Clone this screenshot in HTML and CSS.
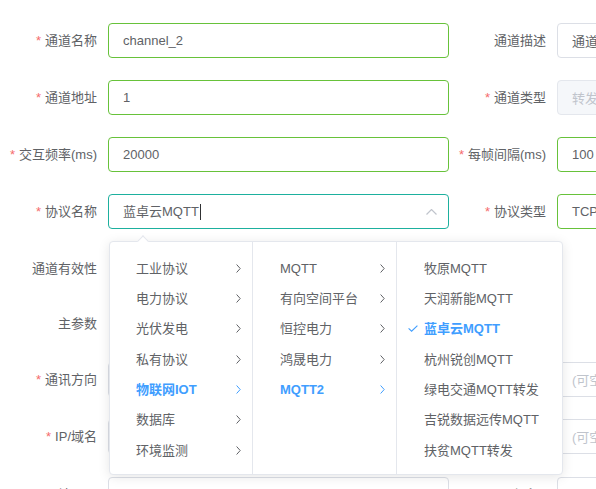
FILE: index.html
```html
<!DOCTYPE html>
<html lang="zh-CN">
<head>
<meta charset="utf-8">
<title>通道配置</title>
<link rel="stylesheet" href="styles.css">
</head>
<body>
<div class="form">
  <div class="row">
    <div class="lbl req">通道名称</div>
    <div class="input ok">channel_2</div>
    <div class="lbl">通道描述</div>
    <div class="input">通道描述</div>
  </div>
  <div class="row">
    <div class="lbl req">通道地址</div>
    <div class="input ok">1</div>
    <div class="lbl req">通道类型</div>
    <div class="input disabled">转发</div>
  </div>
  <div class="row">
    <div class="lbl req">交互频率(ms)</div>
    <div class="input ok">20000</div>
    <div class="lbl req">每帧间隔(ms)</div>
    <div class="input ok">100</div>
  </div>
  <div class="row">
    <div class="lbl req">协议名称</div>
    <div class="input focus">
      <span class="sel-text">蓝卓云MQTT</span><span class="caret"></span>
      <svg class="up" width="11" height="6" viewBox="0 0 11 6"><path d="M0.5 5.5 L5.5 0.5 L10.5 5.5" fill="none" stroke="#C0C4CC" stroke-width="1.2"/></svg>
    </div>
    <div class="lbl req">协议类型</div>
    <div class="input ok">TCP/IP</div>
  </div>
  <div class="row r5">
    <div class="lbl">通道有效性</div>
    <div></div>
    <div></div>
    <div></div>
  </div>
  <div class="row r6">
    <div class="lbl">主参数</div>
    <div></div>
    <div></div>
    <div></div>
  </div>
  <div class="row">
    <div class="lbl req">通讯方向</div>
    <div class="input"></div>
    <div class="lbl"></div>
    <div class="input ph">(可空)</div>
  </div>
  <div class="row r8">
    <div class="lbl req">IP/域名</div>
    <div class="input"></div>
    <div class="lbl"></div>
    <div class="input ph">(可空)</div>
  </div>
  <div class="row">
    <div class="lbl req">端口号</div>
    <div class="input"></div>
    <div class="lbl">保留1</div>
    <div class="input"></div>
  </div>
</div>

<div class="cascader">
  <div class="arrow"></div>
  <div class="col col1">
    <div class="item"><span>工业协议</span><svg class="chev" width="5" height="9" viewBox="0 0 5 9"><path d="M0.6 0.5 L4.2 4.5 L0.6 8.5" fill="none" stroke="#606266" stroke-width="1"/></svg></div>
    <div class="item"><span>电力协议</span><svg class="chev" width="5" height="9" viewBox="0 0 5 9"><path d="M0.6 0.5 L4.2 4.5 L0.6 8.5" fill="none" stroke="#606266" stroke-width="1"/></svg></div>
    <div class="item"><span>光伏发电</span><svg class="chev" width="5" height="9" viewBox="0 0 5 9"><path d="M0.6 0.5 L4.2 4.5 L0.6 8.5" fill="none" stroke="#606266" stroke-width="1"/></svg></div>
    <div class="item"><span>私有协议</span><svg class="chev" width="5" height="9" viewBox="0 0 5 9"><path d="M0.6 0.5 L4.2 4.5 L0.6 8.5" fill="none" stroke="#606266" stroke-width="1"/></svg></div>
    <div class="item active"><span>物联网IOT</span><svg class="chev" width="5" height="9" viewBox="0 0 5 9"><path d="M0.6 0.5 L4.2 4.5 L0.6 8.5" fill="none" stroke="#409EFF" stroke-width="1"/></svg></div>
    <div class="item"><span>数据库</span><svg class="chev" width="5" height="9" viewBox="0 0 5 9"><path d="M0.6 0.5 L4.2 4.5 L0.6 8.5" fill="none" stroke="#606266" stroke-width="1"/></svg></div>
    <div class="item"><span>环境监测</span><svg class="chev" width="5" height="9" viewBox="0 0 5 9"><path d="M0.6 0.5 L4.2 4.5 L0.6 8.5" fill="none" stroke="#606266" stroke-width="1"/></svg></div>
  </div>
  <div class="col col2">
    <div class="item"><span>MQTT</span><svg class="chev" width="5" height="9" viewBox="0 0 5 9"><path d="M0.6 0.5 L4.2 4.5 L0.6 8.5" fill="none" stroke="#606266" stroke-width="1"/></svg></div>
    <div class="item"><span>有向空间平台</span><svg class="chev" width="5" height="9" viewBox="0 0 5 9"><path d="M0.6 0.5 L4.2 4.5 L0.6 8.5" fill="none" stroke="#606266" stroke-width="1"/></svg></div>
    <div class="item"><span>恒控电力</span><svg class="chev" width="5" height="9" viewBox="0 0 5 9"><path d="M0.6 0.5 L4.2 4.5 L0.6 8.5" fill="none" stroke="#606266" stroke-width="1"/></svg></div>
    <div class="item"><span>鸿晟电力</span><svg class="chev" width="5" height="9" viewBox="0 0 5 9"><path d="M0.6 0.5 L4.2 4.5 L0.6 8.5" fill="none" stroke="#606266" stroke-width="1"/></svg></div>
    <div class="item active"><span>MQTT2</span><svg class="chev" width="5" height="9" viewBox="0 0 5 9"><path d="M0.6 0.5 L4.2 4.5 L0.6 8.5" fill="none" stroke="#409EFF" stroke-width="1"/></svg></div>
  </div>
  <div class="col col3">
    <div class="item"><span>牧原MQTT</span></div>
    <div class="item"><span>天润新能MQTT</span></div>
    <div class="item active checked"><svg class="check" width="10" height="7" viewBox="0 0 10 7"><path d="M0.6 3.4 L3.6 6.2 L9.4 0.6" fill="none" stroke="#409EFF" stroke-width="1.1"/></svg><span>蓝卓云MQTT</span></div>
    <div class="item"><span>杭州锐创MQTT</span></div>
    <div class="item"><span>绿电交通MQTT转发</span></div>
    <div class="item"><span>吉锐数据远传MQTT</span></div>
    <div class="item"><span>扶贫MQTT转发</span></div>
  </div>
</div>
</body>
</html>
```

FILE: styles.css
```css
html, body {
  margin: 0;
  padding: 0;
  overflow: hidden;
  background: #fff;
}

body {
  position: relative;
  width: 596px;
  height: 489px;
  font-family: "Liberation Sans", "Noto Sans CJK SC", sans-serif;
  font-size: 13px;
  color: #606266;
}

.form {
  padding-top: 23px;
}

.row {
  display: grid;
  grid-template-columns: 108px 341px 108px 341px;
  height: 35px;
  margin-bottom: 22px;
}

.row.r5 {
  height: 34px;
  margin-bottom: 21px;
}

.row.r6 {
  height: 34px;
  margin-bottom: 22px;
}

.row.r8 {
  margin-bottom: 23px;
}

.lbl {
  display: flex;
  align-items: center;
  justify-content: flex-end;
  padding-right: 11px;
  white-space: nowrap;
  line-height: 1;
}

.lbl.req::before {
  content: "*";
  color: #F56C6C;
  margin-right: 4px;
}

.input {
  box-sizing: border-box;
  border: 1px solid #DCDFE6;
  border-radius: 4px;
  padding: 0 14px;
  display: flex;
  align-items: center;
  white-space: nowrap;
  overflow: hidden;
  color: #606266;
  background: #fff;
}

.input.ok {
  border-color: #67C23A;
}

.input.disabled {
  background: #F5F7FA;
  border-color: #E4E7ED;
  color: #C0C4CC;
}

.input.ph {
  color: #C0C4CC;
}

.input.focus {
  border-color: #1DB09E;
}

.sel-text {
  line-height: 1;
}

.caret {
  display: inline-block;
  width: 1px;
  height: 16px;
  background: #303133;
  margin-left: 1px;
}

.up {
  margin-left: auto;
  margin-right: -3px;
}

/* cascader dropdown */
.cascader {
  position: absolute;
  top: 241px;
  left: 109px;
  width: 454px;
  height: 234px;
  box-sizing: border-box;
  border: 1px solid #E4E7ED;
  border-radius: 4px;
  background: #fff;
  box-shadow: 0 2px 12px 0 rgba(0, 0, 0, 0.1);
  display: flex;
}

.arrow {
  position: absolute;
  top: -5px;
  left: 29px;
  width: 8px;
  height: 8px;
  box-sizing: border-box;
  background: #fff;
  border-top: 1px solid #E4E7ED;
  border-left: 1px solid #E4E7ED;
  transform: rotate(45deg);
}

.col {
  box-sizing: border-box;
  padding: 11px 0 9px;
  border-right: 1px solid #E4E7ED;
}

.col1 {
  width: 143px;
}

.col2 {
  width: 144px;
}

.col3 {
  flex: 1;
  border-right: none;
}

.item {
  height: 30.33px;
  display: flex;
  align-items: center;
  justify-content: space-between;
  padding: 0 11px 0 27px;
  white-space: nowrap;
  line-height: 1;
}

.col1 .item {
  padding-left: 26px;
}

.col3 .item {
  justify-content: flex-start;
}

.item.active {
  color: #409EFF;
  font-weight: bold;
}

.item.checked {
  padding-left: 11px;
}

.check {
  margin-right: 6px;
}
```
